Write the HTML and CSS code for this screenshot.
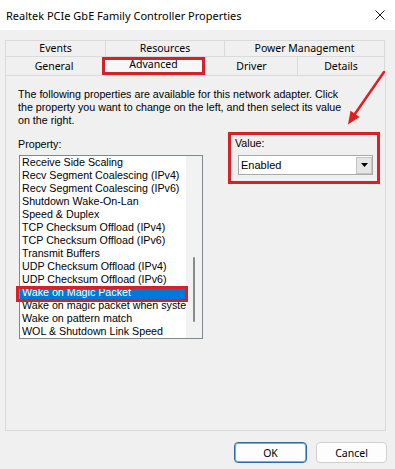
FILE: index.html
```html
<!DOCTYPE html>
<html>
<head>
<meta charset="utf-8">
<link rel="stylesheet" href="styles.css">
</head>
<body>
<div class="titlebar">
  <span class="title">Realtek PCIe GbE Family Controller Properties</span>
  <svg class="close" viewBox="0 0 10 10"><path d="M0.5 0.5 L9.5 9.5 M9.5 0.5 L0.5 9.5" stroke="#1a1a1a" stroke-width="1" fill="none"/></svg>
</div>
<div class="content">
  <div class="tabrow top">
    <div class="tab t-events">Events</div>
    <div class="tab t-resources">Resources</div>
    <div class="tab t-power">Power Management</div>
  </div>
  <div class="tabrow bottom">
    <div class="tab t-general">General</div>
    <div class="tab t-advanced active">Advanced</div>
    <div class="tab t-driver">Driver</div>
    <div class="tab t-details">Details</div>
  </div>
  <div class="panel">
    <p class="desc">The following properties are available for this network adapter. Click<br>the property you want to change on the left, and then select its value<br>on the right.</p>
    <div class="props">
      <div class="prop-col">
        <div class="label">Property:</div>
        <div class="listbox">
          <ul class="items">
            <li>Receive Side Scaling</li>
            <li>Recv Segment Coalescing (IPv4)</li>
            <li>Recv Segment Coalescing (IPv6)</li>
            <li>Shutdown Wake-On-Lan</li>
            <li>Speed &amp; Duplex</li>
            <li>TCP Checksum Offload (IPv4)</li>
            <li>TCP Checksum Offload (IPv6)</li>
            <li>Transmit Buffers</li>
            <li>UDP Checksum Offload (IPv4)</li>
            <li>UDP Checksum Offload (IPv6)</li>
            <li class="sel">Wake on Magic Packet</li>
            <li>Wake on magic packet when system is in the S0ix power state</li>
            <li>Wake on pattern match</li>
            <li>WOL &amp; Shutdown Link Speed</li>
          </ul>
          <div class="scroll"><div class="thumb"></div></div>
        </div>
      </div>
      <div class="value-box">
        <div class="label">Value:</div>
        <div class="combo">
          <span class="combo-text">Enabled</span>
          <span class="drop"><svg viewBox="0 0 7 4" width="7" height="4"><polygon points="0,0 7,0 3.5,4" fill="#000"/></svg></span>
        </div>
      </div>
    </div>
  </div>
  <div class="buttons">
    <button class="btn ok">OK</button>
    <button class="btn cancel">Cancel</button>
  </div>
</div>
<svg class="arrow" viewBox="0 0 395 469" width="395" height="469">
  <line x1="384" y1="72" x2="354.5" y2="114.5" stroke="#e0201f" stroke-width="2.5" stroke-linecap="round"/>
  <polygon points="348,124.5 359.5,117 350.5,110.8" fill="#e0201f"/>
</svg>
</body>
</html>
```

FILE: styles.css
```css
* { box-sizing: border-box; }

body {
  margin: 0;
  width: 395px;
  height: 469px;
  background: #f0f0f0;
  font-family: "Liberation Sans", Arial, sans-serif;
  font-size: 10.7px;
  color: #000;
  position: relative;
  overflow: hidden;
}

.titlebar {
  height: 30px;
  background: #fff;
  display: flex;
  align-items: center;
  justify-content: space-between;
  padding: 0 10px 0 6px;
}

.title {
  font-family: "Noto Sans", sans-serif;
  font-size: 11px;
  color: #000;
}

.close { width: 10px; height: 10px; display: block; }

.content { padding: 10px 0 0 5px; }

.tabrow {
  display: flex;
  font-family: "Noto Sans", sans-serif;
  font-size: 10.5px;
}

.tab {
  border: 1px solid #dadada;
  margin-right: -1px;
  text-align: center;
  background: #f0f0f0;
  white-space: nowrap;
}

.tabrow.top { height: 17px; }
.tabrow.top .tab { height: 17px; line-height: 15px; }
.t-events { width: 101px; }
.t-resources { width: 120px; }
.t-power { width: 161px; }

.tabrow.bottom { height: 19px; margin-top: -1px; }
.tabrow.bottom .tab {
  height: 19px;
  border-bottom: none;
  padding-top: 2px;
  line-height: 15px;
}
.t-general { width: 98px; }
.t-driver { width: 93px; }
.t-details { width: 88px; }

.tabrow.bottom .tab.active {
  width: 103px;
  height: 18px;
  margin-top: 1px;
  margin-right: 0;
  border: 3px solid #d3222a;
  background: #f7f7f7;
  padding-top: 0;
  line-height: 8px;
  position: relative;
  z-index: 1;
}

.panel {
  width: 381px;
  height: 356px;
  border: 1px solid #d9d9d9;
  background: #f0f0f0;
  padding: 12px 5px 0 12px;
}

.desc {
  margin: 0;
  line-height: 13px;
  white-space: nowrap;
}

.props {
  display: flex;
  justify-content: space-between;
  align-items: flex-start;
  margin-top: 5px;
}

.prop-col { padding-top: 6px; }

.label { line-height: 13px; }

.listbox {
  margin: 4px 0 0 1px;
  width: 184px;
  height: 184px;
  border: 1px solid #828790;
  background: #fff;
  display: flex;
}

.items {
  list-style: none;
  margin: 0;
  padding: 0;
  width: 166px;
}

.items li {
  height: 13px;
  line-height: 13px;
  padding-left: 2px;
  white-space: nowrap;
  overflow: hidden;
}

.items li.sel {
  background: #0078d7;
  color: #fff;
  overflow: visible;
  position: relative;
}

.items li.sel::after {
  content: "";
  position: absolute;
  left: -4px;
  right: -2px;
  top: 0;
  bottom: -3px;
  border: 3px solid #d3222a;
}

.scroll {
  width: 16px;
  background: #f2f2f2;
  display: flex;
  justify-content: center;
}

.thumb {
  margin-top: 101px;
  width: 2px;
  height: 65px;
  background: #8a8a8a;
  border-radius: 1px;
}

.value-box {
  width: 152px;
  height: 52px;
  border: 3px solid #d3222a;
  padding: 2px 0 0 4px;
}

.combo {
  margin: 5px 0 0 3px;
  width: 135px;
  height: 20px;
  border: 1px solid #a9a9a9;
  background: #fff;
  display: flex;
  align-items: center;
  justify-content: space-between;
  padding: 0 0 0 2px;
}

.combo-text { font-size: 11px; }

.drop {
  width: 16px;
  height: 17px;
  background: #e5e5e5;
  border: 1px solid #c4c4c4;
  display: flex;
  align-items: center;
  justify-content: center;
}

.drop svg { display: block; }

.buttons {
  display: flex;
  justify-content: flex-end;
  gap: 9px;
  padding-right: 8px;
  margin-top: 11px;
}

.btn {
  height: 21px;
  border: 1px solid #d0d0d0;
  border-radius: 4px;
  background: #fdfdfd;
  font-family: "Noto Sans", sans-serif;
  font-size: 10.5px;
  color: #000;
  padding: 0;
}

.btn.ok { width: 73px; border-color: #2a6cae; box-shadow: inset 0 0 0 1px #7fa9d4; }
.btn.cancel { width: 71px; }

.arrow {
  position: absolute;
  left: 0;
  top: 0;
  pointer-events: none;
}
```
